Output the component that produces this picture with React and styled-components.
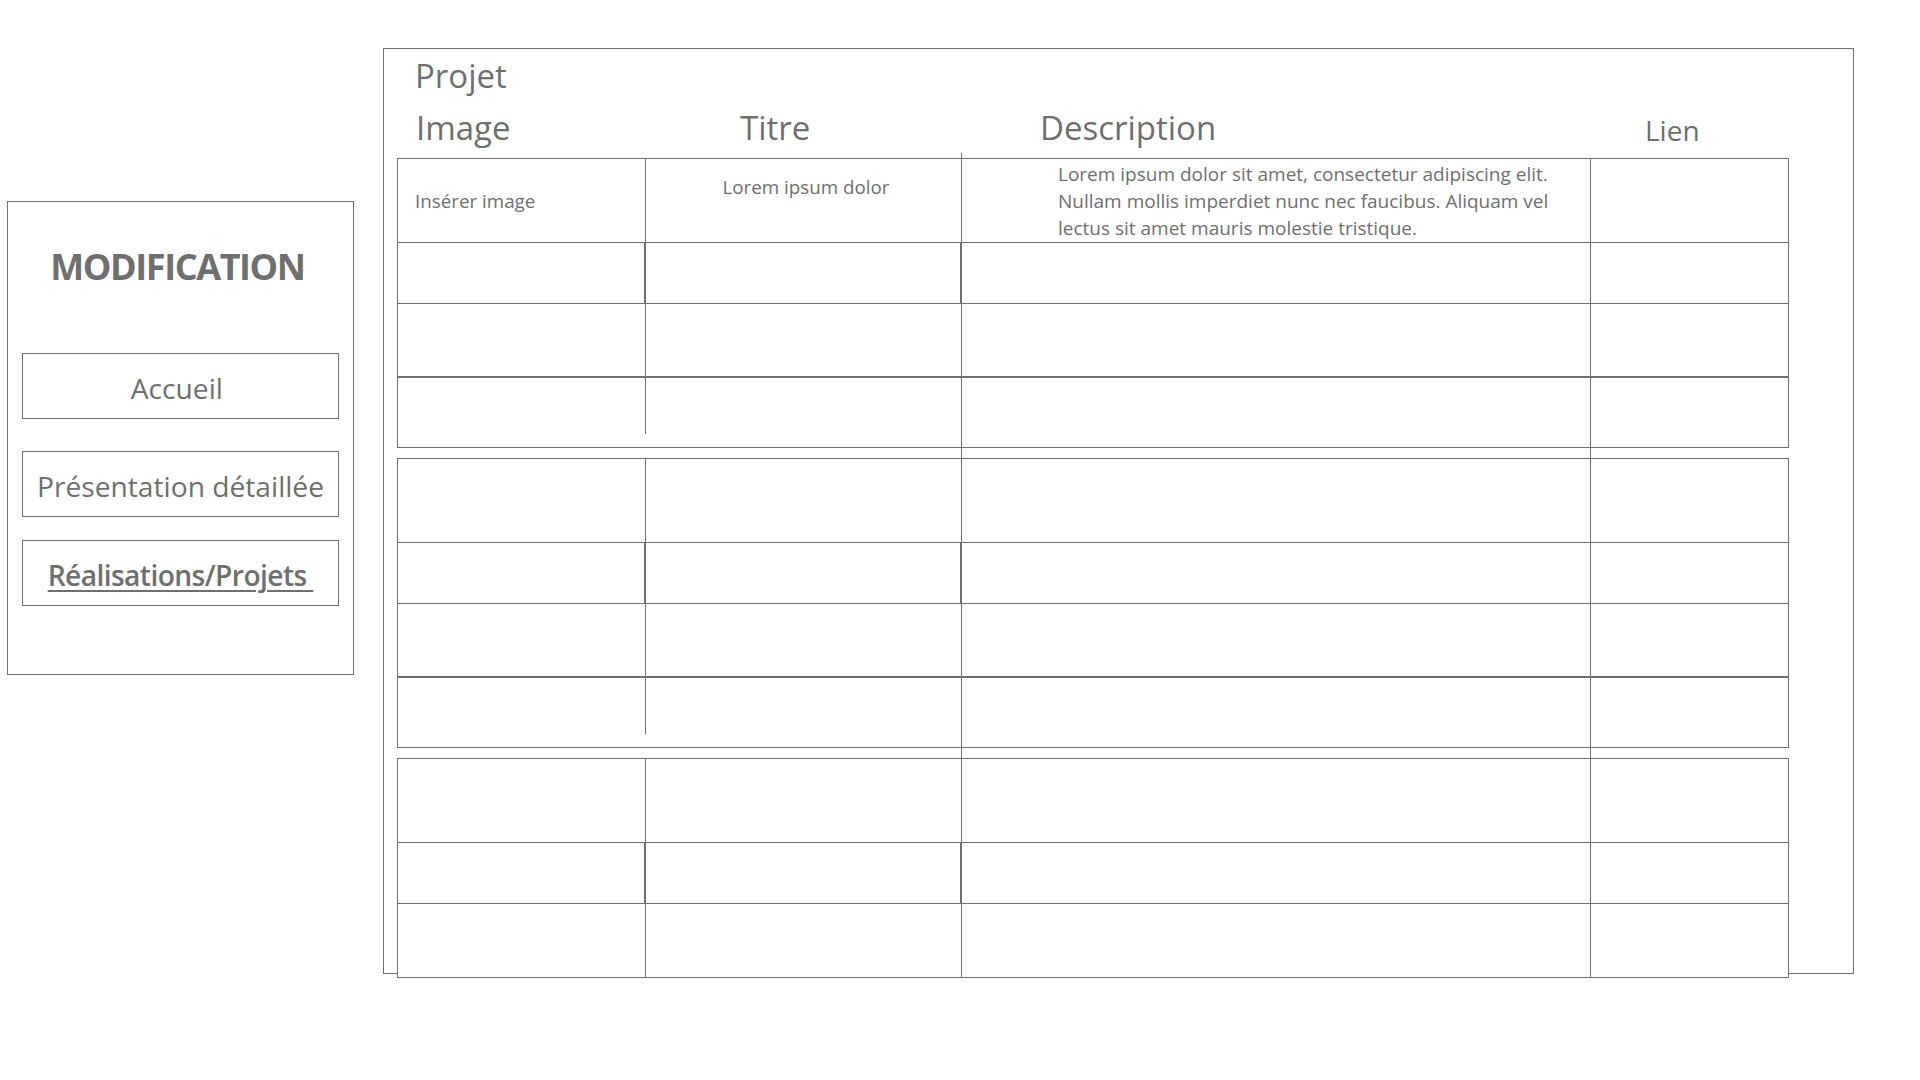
import React from 'react'
import styled, { createGlobalStyle, css } from 'styled-components'

const ink = '#6f6f6f'
const rule = '#707070'
const COLS = '248px 316px 629px 197px'

const GlobalStyle = createGlobalStyle`
  body {
    margin: 0;
    background: #fff;
    color: ${ink};
    font-family: 'Open Sans', 'Noto Sans', sans-serif;
  }
`

const Page = styled.div`
  box-sizing: border-box;
  display: flex;
  align-items: flex-start;
  width: 1920px;
  height: 1080px;
  padding-left: 7px;
`

const Sidebar = styled.aside`
  box-sizing: border-box;
  width: 347px;
  height: 474px;
  margin-top: 201px;
  padding: 40px 14px 0;
  border: 1px solid ${rule};
`

const SideTitle = styled.h1`
  margin: 0 0 62px;
  padding-right: 6px;
  font-size: 36px;
  line-height: 49px;
  font-weight: 700;
  letter-spacing: -1.4px;
  text-align: center;
`

const NavButton = styled.a`
  box-sizing: border-box;
  display: flex;
  align-items: center;
  justify-content: center;
  height: 66px;
  margin-top: ${p => p.$gap || 0}px;
  padding-top: 3px;
  border: 1px solid ${rule};
  color: ${ink};
  font-size: 28.2px;
  white-space: pre;
  text-decoration: none;
  ${p => p.$current && css`
    font-weight: 600;
    letter-spacing: -0.6px;
    text-decoration: underline;
    text-decoration-thickness: 2px;
    text-underline-offset: 4px;
  `}
`

const Panel = styled.main`
  box-sizing: border-box;
  width: 1471px;
  height: 926px;
  margin: 48px 0 0 29px;
  padding-left: 13px;
  border: 1px solid ${rule};
`

const Heading = styled.div`
  padding-left: 18px;
  font-size: 33px;
  line-height: 53px;
`

const HeadRow = styled.div`
  display: grid;
  grid-template-columns: ${COLS};
  grid-template-rows: 51px;
  padding-left: 1px;
`

const HeadCell = styled.div`
  padding: ${p => p.$drop || 0}px 0 0 ${p => p.$indent}px;
  font-size: ${p => p.$size}px;
  line-height: 51px;
  white-space: nowrap;
`

const Joint = styled.div`
  display: grid;
  grid-template-columns: ${COLS};
  height: ${p => p.$h}px;
  padding-left: 1px;
`

const JointLine = styled.div`
  border-right: ${p => (p.$on ? `1px solid ${rule}` : 'none')};
`

const Group = styled.div`
  box-sizing: border-box;
  display: grid;
  grid-template-columns: ${COLS};
  width: 1392px;
  border: 1px solid ${rule};
  background: #fff;
`

const Cell = styled.div`
  box-sizing: border-box;
  height: ${p => p.$h}px;
  border-right: ${p => (p.$side ? `${p.$side}px solid ${rule}` : 'none')};
  border-bottom: ${p => (p.$under ? `${p.$under}px solid ${rule}` : 'none')};
  font-size: 18.8px;
  line-height: 22px;
  ${p => p.$stub && css`
    background: linear-gradient(${rule}, ${rule}) right top / 1px calc(100% - 13px) no-repeat;
  `}
`

const ImageSlot = styled(Cell)`
  display: flex;
  align-items: center;
  padding-left: 17px;
`

const TitleSlot = styled(Cell)`
  padding: 17px 0 0 5px;
  text-align: center;
`

const DescSlot = styled(Cell)`
  padding: 2px 0 0 96px;
  font-size: 19px;
  line-height: 27px;
`

const groups = [
  { rows: [84, 61, 74, 69], thick: 2, stub: true },
  { rows: [84, 61, 74, 69], thick: 2, stub: true },
  { rows: [84, 61, 73], thick: -1, stub: false },
]

const sample = {
  image: 'Insérer image',
  title: 'Lorem ipsum dolor',
  desc: [
    'Lorem ipsum dolor sit amet, consectetur adipiscing elit.',
    'Nullam mollis imperdiet nunc nec faucibus. Aliquam vel',
    'lectus sit amet mauris molestie tristique.',
  ],
}

const TableGroup = ({ rows, thick, stub, filled }) => (
  <Group>
    {rows.map((h, r) => {
      const last = r === rows.length - 1
      const under = last ? 0 : r === thick ? 2 : 1
      const side = r === 1 ? 2 : 1
      const showText = filled && r === 0
      return (
        <React.Fragment key={r}>
          {last && stub ? (
            <Cell $h={h} $under={under} $stub />
          ) : (
            <ImageSlot $h={h} $under={under} $side={side}>
              {showText ? sample.image : null}
            </ImageSlot>
          )}
          <TitleSlot $h={h} $under={under} $side={side}>
            {showText ? sample.title : null}
          </TitleSlot>
          <DescSlot $h={h} $under={under} $side={1}>
            {showText
              ? sample.desc.map((line, i) => (
                  <React.Fragment key={i}>
                    {line}
                    {i < sample.desc.length - 1 && <br />}
                  </React.Fragment>
                ))
              : null}
          </DescSlot>
          <Cell $h={h} $under={under} />
        </React.Fragment>
      )
    })}
  </Group>
)

const App = () => {
  return (
    <>
      <GlobalStyle />
      <Page>
        <Sidebar>
          <SideTitle>MODIFICATION</SideTitle>
          <NavButton>{'Accueil\u00a0'}</NavButton>
          <NavButton $gap={32}>Présentation détaillée</NavButton>
          <NavButton $gap={23} $current>{'Réalisations/Projets\u00a0'}</NavButton>
        </Sidebar>

        <Panel>
          <Heading>Projet</Heading>
          <HeadRow>
            <HeadCell $indent={18} $size={33}>Image</HeadCell>
            <HeadCell $indent={94} $size={33}>Titre</HeadCell>
            <HeadCell $indent={78} $size={33}>Description</HeadCell>
            <HeadCell $indent={54} $size={28} $drop={3}>Lien</HeadCell>
          </HeadRow>
          <Joint $h={5}>
            <JointLine />
            <JointLine $on />
            <JointLine />
          </Joint>
          {groups.map((g, i) => (
            <React.Fragment key={i}>
              {i > 0 && (
                <Joint $h={10}>
                  <JointLine />
                  <JointLine $on />
                  <JointLine $on />
                </Joint>
              )}
              <TableGroup {...g} filled={i === 0} />
            </React.Fragment>
          ))}
        </Panel>
      </Page>
    </>
  )
}

export default App
